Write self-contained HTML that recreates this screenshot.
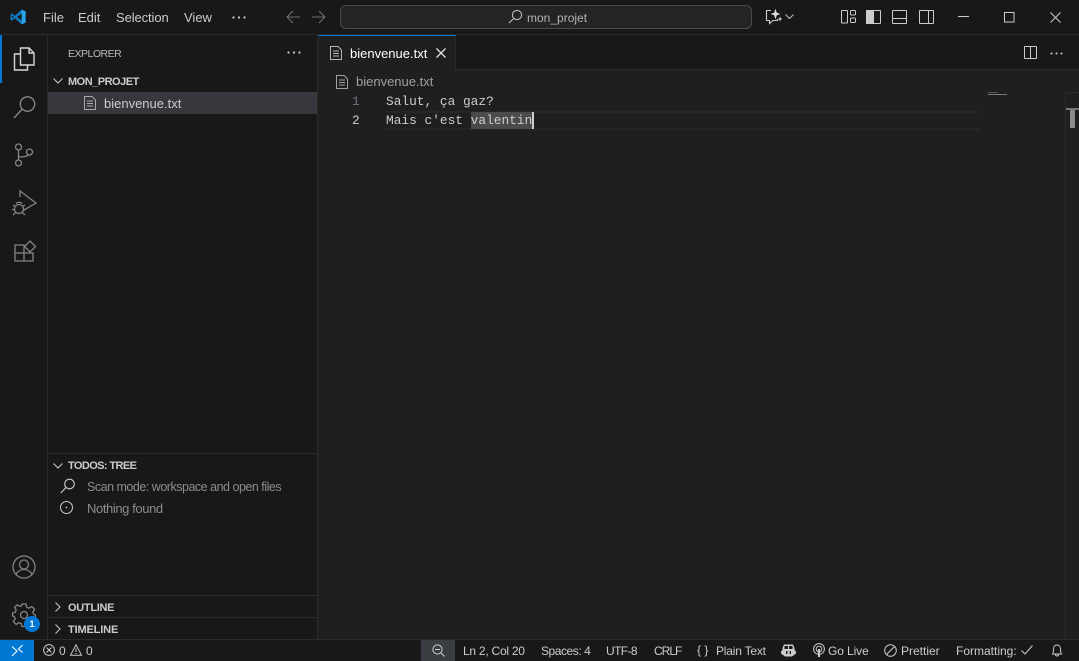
<!DOCTYPE html>
<html><head><meta charset="utf-8">
<style>
html,body{margin:0;padding:0;background:#1f1f1f;}
#r{position:relative;width:1079px;height:661px;overflow:hidden;background:#1f1f1f;font-family:"Liberation Sans",sans-serif;font-size:13px;color:#ccc;}
.a{position:absolute;}
.t{position:absolute;white-space:nowrap;line-height:16px;}
.b{font-weight:bold;font-size:11px;color:#ccc;}
.m{font-family:"Liberation Mono",monospace;font-size:12.83px;line-height:18px;}
svg{position:absolute;overflow:visible;fill:none;}
.s{font-size:12px;color:#ccc;}
</style></head><body><div id="r">
<!-- title bar -->
<div class="a" style="left:0;top:0;width:1079px;height:34px;background:#181818;border-bottom:1px solid #2b2b2b;"></div>
<svg style="left:10px;top:9px" width="16" height="16" viewBox="0 0 16 16"><path d="M11.6 0.6 L15.6 2.4 V13.6 L11.6 15.4 L5 9.3 L2 11.6 L0.5 10.8 V5.2 L2 4.4 L5 6.7 Z" fill="#0f7ac4"/><path d="M11.6 4.6 V11.4 L7.1 8 Z" fill="#181818"/><path d="M1.9 6.3 V9.7 L3.8 8 Z" fill="#181818"/><path d="M11.6 .6 L15.6 2.4 V13.6 L11.6 15.4 Z" fill="#2aa3e8"/><path d="M11.6 4.6 V11.4 L9.6 9.9 V6.1 Z" fill="#181818"/></svg>
<div class="t" style="left:43px;top:10px;color:#ccc">File</div>
<div class="t" style="left:78px;top:10px">Edit</div>
<div class="t" style="left:116px;top:10px;letter-spacing:-.1px">Selection</div>
<div class="t" style="left:184px;top:10px">View</div>
<svg style="left:232px;top:16px" width="14" height="3"><circle cx="1.5" cy="1.5" r="1.1" fill="#ccc"/><circle cx="7" cy="1.5" r="1.1" fill="#ccc"/><circle cx="12.5" cy="1.5" r="1.1" fill="#ccc"/></svg>
<svg style="left:286px;top:10px" width="14" height="14" stroke="#6e6e6e" stroke-width="1.1"><path d="M1 7H14M7 1 L1 7 L7 13"/></svg>
<svg style="left:312px;top:10px" width="14" height="14" stroke="#6e6e6e" stroke-width="1.1"><path d="M0 7H13M7 1 L13 7 L7 13"/></svg>
<div class="a" style="left:340px;top:5px;width:410px;height:22px;background:#242424;border:1px solid #4a4a4a;border-radius:6px;"></div>
<svg style="left:508px;top:9px" width="15" height="15" stroke="#bbb" stroke-width="1.1"><circle cx="9" cy="6" r="4.6"/><path d="M5.8 9.4 L1 14"/></svg>
<div class="t" style="left:527px;top:10px;font-size:12px;color:#b5b5b5">mon_projet</div>
<svg style="left:765px;top:8px" width="18" height="17" stroke="#ccc" stroke-width="1.1"><path d="M6 2.5H1.5V12.5H4.5V15.5L8 12.5H12.5V11"/><path d="M10.5 .8 L11.8 4.7 L15.5 6 L11.8 7.3 L10.5 11.2 L9.2 7.3 L5.5 6 L9.2 4.7Z" fill="#e0e0e0" stroke="none"/><path d="M15 8.5 L15.7 10.3 L17.5 11 L15.7 11.7 L15 13.5 L14.3 11.7 L12.5 11 L14.3 10.3Z" fill="#ccc" stroke="none"/></svg>
<svg style="left:785px;top:14px" width="9" height="6" stroke="#bbb" stroke-width="1"><path d="M.5 .5 L4.5 4.5 L8.5 .5"/></svg>
<svg style="left:841px;top:10px" width="15" height="14" stroke="#ccc" stroke-width="1"><rect x=".5" y=".5" width="6" height="12.5" rx=".5"/><rect x="9.5" y=".5" width="5" height="4.5" rx="1"/><rect x="9.5" y="8" width="5" height="4.5" rx="1"/></svg>
<svg style="left:866px;top:10px" width="15" height="14" stroke="#ccc" stroke-width="1"><rect x=".5" y=".5" width="14" height="13" rx=".5"/><rect x=".5" y=".5" width="7" height="13" fill="#ccc"/></svg>
<svg style="left:892px;top:10px" width="15" height="14" stroke="#ccc" stroke-width="1"><rect x=".5" y=".5" width="14" height="13" rx=".5"/><path d="M.5 8.5H14.5"/></svg>
<svg style="left:919px;top:10px" width="15" height="14" stroke="#ccc" stroke-width="1"><rect x=".5" y=".5" width="14" height="13" rx=".5"/><path d="M9.5 .5V13.5"/></svg>
<svg style="left:958px;top:16px" width="11" height="2" stroke="#ccc" stroke-width="1"><path d="M0 .5H11"/></svg>
<svg style="left:1004px;top:12px" width="11" height="11" stroke="#ccc" stroke-width="1"><rect x=".5" y=".5" width="9.5" height="9.5"/></svg>
<svg style="left:1050px;top:12px" width="11" height="11" stroke="#ccc" stroke-width="1"><path d="M.5 .5 L10.5 10.5 M10.5 .5 L.5 10.5"/></svg>

<!-- activity bar -->
<div class="a" style="left:0;top:35px;width:47px;height:604px;background:#181818;border-right:1px solid #2b2b2b;"></div>
<div class="a" style="left:0;top:35px;width:2px;height:48px;background:#0078d4;"></div>
<svg style="left:13px;top:47px" width="22" height="24" stroke="#d7d7d7" stroke-width="1.4"><path d="M7.5 1 H16 L21 6 V18 H7.5 Z"/><path d="M16 1 V6 H21"/><path d="M7.5 7 H1.5 V23 H14.5 V18"/></svg>
<svg style="left:13px;top:95px" width="23" height="25" stroke="#858585" stroke-width="1.4"><circle cx="14.5" cy="9" r="7.2"/><path d="M9.3 14 L1 23"/></svg>
<svg style="left:14px;top:142px" width="21" height="25" stroke="#858585" stroke-width="1.3"><circle cx="4.5" cy="5" r="3"/><circle cx="4.5" cy="21" r="3"/><circle cx="15.5" cy="10" r="3"/><path d="M4.5 8V18M4.5 15 C10 15 13 14.5 14.5 12.8"/></svg>
<svg style="left:11px;top:190px" width="26" height="27" stroke="#858585" stroke-width="1.3"><path d="M9 7 V1 L25 13 L13 20"/><circle cx="8" cy="19" r="4.5"/><path d="M5 13.5 C6 12 10 12 11 13.5 M2 15 L4.5 16.5 M14 15 L11.5 16.5 M1 19.5 H3.5 M15 19.5 H12.5 M2 25 L4.5 22.5 M14 25 L11.5 22.5"/></svg>
<svg style="left:14px;top:240px" width="23" height="23" stroke="#858585" stroke-width="1.3"><path d="M1 5 H10 V21 H1 Z M1 13 H19 V21 H10 M10 13 V5"/><path d="M16 1 L21.5 6.5 L16 12 L10.5 6.5 Z"/></svg>
<svg style="left:12px;top:555px" width="24" height="24" stroke="#858585" stroke-width="1.3"><circle cx="12" cy="12" r="11"/><circle cx="12" cy="9.5" r="4.5"/><path d="M4 19.5 C6 15.5 8.5 14.5 12 14.5 C15.5 14.5 18 15.5 20 19.5"/></svg>
<svg style="left:12px;top:603px" width="24" height="24" stroke="#858585" stroke-width="1.3"><path d="M10 1 H14 L14.7 4.2 L17 5.2 L19.8 3.4 L22.6 6.2 L20.8 9 L21.8 11.3 L23.4 12 V15 L20.8 15.6 L19.8 18 L21.4 20.6 L18.6 23 L16 21.4 L14 22.2 L13.6 23.5 H10 L9.3 20.6 L7 19.6 L4.2 21.4 L1.4 18.6 L3.2 15.8 L2.2 13.5 L.6 13 V10 L3.2 9.2 L4.2 7 L2.6 4.2 L5.4 1.8 L8 3.4 L9.5 2.8 Z"/><circle cx="12" cy="12" r="3.5"/></svg>
<div class="a" style="left:24px;top:616px;width:16px;height:16px;border-radius:50%;background:#0078d4;color:#fff;font-size:9px;font-weight:bold;text-align:center;line-height:16px;">1</div>

<!-- sidebar -->
<div class="a" style="left:48px;top:35px;width:269px;height:604px;background:#181818;border-right:1px solid #2b2b2b;"></div>
<div class="t" style="left:68px;top:46px;font-size:10.5px;letter-spacing:-.5px;color:#bbb">EXPLORER</div>
<svg style="left:287px;top:51px" width="14" height="3"><circle cx="1.5" cy="1.5" r="1.1" fill="#ccc"/><circle cx="7" cy="1.5" r="1.1" fill="#ccc"/><circle cx="12.5" cy="1.5" r="1.1" fill="#ccc"/></svg>
<svg style="left:53px;top:78px" width="10" height="6" stroke="#ccc" stroke-width="1"><path d="M.5 .5 L5 5 L9.5 .5"/></svg>
<div class="t b" style="left:68px;top:74px;letter-spacing:-.5px">MON_PROJET</div>
<div class="a" style="left:48px;top:92px;width:269px;height:22px;background:#37373d;"></div>
<svg style="left:84px;top:96px" width="12" height="14" stroke="#a9a9a9" stroke-width="1"><path d="M.5 .5H8L11.5 4V13.5H.5Z"/><path d="M3 5H9M3 7.5H9M3 10H9"/></svg>
<div class="t" style="left:104px;top:96px;color:#ccc">bienvenue.txt</div>
<div class="a" style="left:48px;top:453px;width:269px;height:1px;background:#2b2b2b;"></div>
<svg style="left:53px;top:463px" width="10" height="6" stroke="#ccc" stroke-width="1"><path d="M.5 .5 L5 5 L9.5 .5"/></svg>
<div class="t b" style="left:68px;top:458px;letter-spacing:-.6px">TODOS: TREE</div>
<svg style="left:60px;top:478px" width="16" height="16" stroke="#ccc" stroke-width="1.1"><circle cx="9.5" cy="6" r="4.8"/><path d="M6 9.5 L.8 15"/></svg>
<div class="t" style="left:87px;top:479px;font-size:12.5px;letter-spacing:-.49px;color:#8c8c8c">Scan mode: workspace and open files</div>
<svg style="left:60px;top:501px" width="14" height="14" stroke="#ccc" stroke-width="1"><circle cx="6.5" cy="6.5" r="6"/><circle cx="6.5" cy="6.5" r=".9" fill="#ccc" stroke="none"/></svg>
<div class="t" style="left:87px;top:501px;font-size:13px;letter-spacing:-.4px;color:#8c8c8c">Nothing found</div>
<div class="a" style="left:48px;top:595px;width:269px;height:1px;background:#2b2b2b;"></div>
<svg style="left:55px;top:602px" width="6" height="10" stroke="#ccc" stroke-width="1"><path d="M.5 .5 L5 5 L.5 9.5"/></svg>
<div class="t b" style="left:68px;top:600px;letter-spacing:-.3px">OUTLINE</div>
<div class="a" style="left:48px;top:617px;width:269px;height:1px;background:#2b2b2b;"></div>
<svg style="left:55px;top:624px" width="6" height="10" stroke="#ccc" stroke-width="1"><path d="M.5 .5 L5 5 L.5 9.5"/></svg>
<div class="t b" style="left:68px;top:622px;letter-spacing:-.15px">TIMELINE</div>

<!-- tabs -->
<div class="a" style="left:318px;top:35px;width:761px;height:34px;background:#181818;border-bottom:1px solid #2b2b2b;"></div>
<div class="a" style="left:318px;top:35px;width:138px;height:35px;background:#1f1f1f;border-top:1px solid #0078d4;border-right:1px solid #2b2b2b;box-sizing:border-box;"></div>
<svg style="left:330px;top:46px" width="12" height="14" stroke="#b5b5b5" stroke-width="1"><path d="M.5 .5H8L11.5 4V13.5H.5Z"/><path d="M3 5H9M3 7.5H9M3 10H9"/></svg>
<div class="t" style="left:350px;top:46px;color:#fff">bienvenue.txt</div>
<svg style="left:436px;top:48px" width="10" height="10" stroke="#ddd" stroke-width="1.3"><path d="M.5 .5 L9.5 9.5M9.5 .5 L.5 9.5"/></svg>
<svg style="left:1024px;top:46px" width="13" height="13" stroke="#ccc" stroke-width="1"><rect x=".5" y=".5" width="12" height="12" rx=".5"/><path d="M6.5 .5V12.5"/></svg>
<svg style="left:1050px;top:52px" width="13" height="3"><circle cx="1.5" cy="1.5" r="1" fill="#ccc"/><circle cx="6.5" cy="1.5" r="1" fill="#ccc"/><circle cx="11.5" cy="1.5" r="1" fill="#ccc"/></svg>

<!-- breadcrumb -->
<svg style="left:336px;top:75px" width="12" height="14" stroke="#a0a0a0" stroke-width="1"><path d="M.5 .5H8L11.5 4V13.5H.5Z"/><path d="M3 5H9M3 7.5H9M3 10H9"/></svg>
<div class="t" style="left:356px;top:74px;color:#a0a0a0">bienvenue.txt</div>

<!-- editor -->
<div class="a" style="left:386px;top:111px;width:594px;height:19px;border-top:2px solid #262626;border-bottom:2px solid #262626;box-sizing:border-box;"></div>
<div class="a" style="left:471px;top:112px;width:62px;height:17px;background:#4b4b4b;"></div>
<div class="t m" style="left:352px;top:93px;color:#6e7681">1</div>
<div class="t m" style="left:352px;top:112px;color:#ccc">2</div>
<div class="t m" style="left:386px;top:93px;color:#ccc">Salut, ça gaz?</div>
<div class="t m" style="left:386px;top:112px;color:#ccc">Mais c'est valentin</div>
<div class="a" style="left:532px;top:112px;width:1.5px;height:17px;background:#ccc;"></div>

<!-- minimap -->
<div class="a" style="left:988px;top:92px;width:10px;height:1px;background:#555;"></div>
<div class="a" style="left:988px;top:94px;width:19px;height:1px;background:#777;"></div>
<div class="a" style="left:1065px;top:92px;width:1px;height:547px;background:#2b2b2b;"></div>
<div class="a" style="left:1066px;top:92px;width:13px;height:1px;background:#2b2b2b;"></div>
<div class="a" style="left:1066px;top:108px;width:13px;height:2px;background:#777;"></div>
<div class="a" style="left:1070px;top:110px;width:5px;height:18px;background:#8a8a8a;"></div>

<!-- status bar -->
<div class="a" style="left:0;top:639px;width:1079px;height:22px;background:#181818;border-top:1px solid #2b2b2b;box-sizing:border-box;"></div>
<div class="a" style="left:0;top:640px;width:34px;height:21px;background:#0078d4;"></div>
<svg style="left:11px;top:644px" width="13" height="13" stroke="#fff" stroke-width="1.1"><path d="M1 12 L6 7 L1 2.5M11.5 1 L7.5 5 L11.5 8.5"/></svg>
<svg style="left:43px;top:644px" width="12" height="12" stroke="#ccc" stroke-width="1"><circle cx="6" cy="6" r="5.4"/><path d="M3.5 3.5 L8.5 8.5M8.5 3.5 L3.5 8.5"/></svg>
<div class="t s" style="left:59px;top:643px">0</div>
<svg style="left:70px;top:644px" width="12" height="12" stroke="#ccc" stroke-width="1"><path d="M6 .8 L11.5 11.2H.5Z M6 4.5V8M6 9V10"/></svg>
<div class="t s" style="left:86px;top:643px">0</div>
<div class="a" style="left:421px;top:640px;width:34px;height:21px;background:#3a3d41;"></div>
<svg style="left:432px;top:644px" width="13" height="13" stroke="#ccc" stroke-width="1"><circle cx="5.5" cy="5.5" r="4.6"/><path d="M3 5.5H8M9 9 L12.5 12.5"/></svg>
<div class="t s" style="left:463px;top:643px;letter-spacing:-.25px">Ln 2, Col 20</div>
<div class="t s" style="left:541px;top:643px;letter-spacing:-.45px">Spaces: 4</div>
<div class="t s" style="left:606px;top:643px;letter-spacing:-.6px">UTF-8</div>
<div class="t s" style="left:654px;top:643px;letter-spacing:-1px">CRLF</div>
<div class="t s" style="left:697px;top:642px">{ }</div>
<div class="t s" style="left:716px;top:643px;letter-spacing:-.2px">Plain Text</div>
<svg style="left:781px;top:643px" width="15" height="14"><path d="M3 1.5 H12 L13.5 5 V7 L15 8.5 V10.5 L11 13.5 H4 L0 10.5 V8.5 L1.5 7 V5Z" fill="#ccc"/><rect x="3.5" y="3" width="3.4" height="3" fill="#181818"/><rect x="8.1" y="3" width="3.4" height="3" fill="#181818"/><rect x="5" y="8" width="1.4" height="3" fill="#181818"/><rect x="8.6" y="8" width="1.4" height="3" fill="#181818"/></svg>
<svg style="left:813px;top:643px" width="12" height="15" stroke="#ccc" stroke-width="1"><circle cx="6" cy="6" r="5.4"/><circle cx="6" cy="6" r="2.8"/><path d="M6 6V14" stroke-width="2"/></svg>
<div class="t s" style="left:828px;top:643px;letter-spacing:-.1px">Go Live</div>
<svg style="left:884px;top:644px" width="13" height="13" stroke="#ccc" stroke-width="1"><circle cx="6.5" cy="6.5" r="5.8"/><path d="M2.5 10.5 L10.5 2.5"/></svg>
<div class="t s" style="left:901px;top:643px">Prettier</div>
<div class="t s" style="left:956px;top:643px">Formatting:</div>
<svg style="left:1021px;top:645px" width="12" height="10" stroke="#ccc" stroke-width="1"><path d="M.5 5.5 L4 9 L11.5 .5"/></svg>
<svg style="left:1051px;top:644px" width="12" height="13" stroke="#ccc" stroke-width="1"><path d="M1.5 10 C2.5 8.5 2.5 7 2.5 5 C2.5 2.5 4 1 6 1 C8 1 9.5 2.5 9.5 5 C9.5 7 9.5 8.5 10.5 10 Z M4.5 10.5 C4.5 12.5 7.5 12.5 7.5 10.5"/></svg>
</div></body></html>
